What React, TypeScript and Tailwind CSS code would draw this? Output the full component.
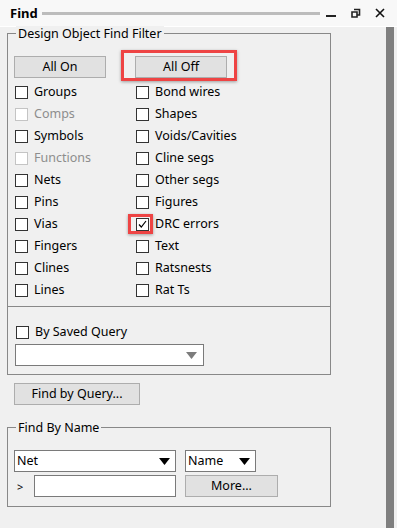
const font = { fontFamily: '"Noto Sans", "Open Sans", sans-serif' };

function Box({ checked, disabled }: { checked?: boolean; disabled?: boolean }) {
  return (
    <span
      className={`flex h-[13px] w-[13px] shrink-0 items-center justify-center border bg-white ${
        disabled ? "border-[#c4c4c4]" : "border-[#333333]"
      }`}
    >
      {checked && (
        <svg width="11" height="11" viewBox="0 0 11 11">
          <path d="M2 5.5 L4.3 8 L9 2" fill="none" stroke="#000" strokeWidth="1.2" />
        </svg>
      )}
    </span>
  );
}

function Check({
  label,
  checked,
  disabled,
}: {
  label: string;
  checked?: boolean;
  disabled?: boolean;
}) {
  return (
    <div className="flex h-[22px] items-center gap-[6px]">
      <Box checked={checked} disabled={disabled} />
      <span className={disabled ? "text-[#8d8d8d]" : "text-black"}>{label}</span>
    </div>
  );
}

function Btn({ label, w }: { label: string; w: string }) {
  return (
    <div
      className={`flex h-[22px] items-center justify-center border border-[#adadad] bg-[#e1e1e1] text-black ${w}`}
    >
      {label}
    </div>
  );
}

function Arrow({ color }: { color: string }) {
  return (
    <svg width="11" height="7" viewBox="0 0 11 7">
      <path d="M0 0 H11 L5.5 7 Z" fill={color} />
    </svg>
  );
}

const left = [
  { l: "Groups" },
  { l: "Comps", d: true },
  { l: "Symbols" },
  { l: "Functions", d: true },
  { l: "Nets" },
  { l: "Pins" },
  { l: "Vias" },
  { l: "Fingers" },
  { l: "Clines" },
  { l: "Lines" },
];

const right = [
  "Bond wires",
  "Shapes",
  "Voids/Cavities",
  "Cline segs",
  "Other segs",
  "Figures",
  "DRC errors",
  "Text",
  "Ratsnests",
  "Rat Ts",
];

export default function App() {
  return (
    <div
      className="flex h-[528px] w-[397px] flex-col overflow-hidden bg-[#f0f0f0] text-[12.5px] leading-none"
      style={font}
    >
      {/* TITLE BAR */}
      <div className="flex h-[27px] shrink-0 items-center border-b border-white bg-[#f8f8f8] pl-[10px]">
        <span className="text-[13px] font-bold text-black">Find</span>
        <div className="ml-[4px] h-[3px] w-[278px] bg-[#bcbcbc]" />
        <div className="ml-[6px] mt-[6px] h-[2px] w-[10px] bg-[#222]" />
        <svg className="ml-[15px]" width="10" height="10" viewBox="0 0 10 10">
          <path d="M1 4 H6 V9 H1 Z M3 1.5 H8.5 V7 H6" fill="none" stroke="#222" strokeWidth="1.6" />
        </svg>
        <svg className="ml-[14px]" width="10" height="10" viewBox="0 0 10 10">
          <path d="M1 1 L9 9 M9 1 L1 9" stroke="#111" strokeWidth="1.6" />
        </svg>
      </div>

      <div className="flex flex-1">
        <div className="flex-1">
          {/* DESIGN OBJECT FIND FILTER */}
          <div className="relative ml-[7px] mt-[6px] flex h-[342px] w-[324px] flex-col border border-[#888888]">
            <span className="absolute left-[8px] top-[-8px] bg-[#f0f0f0] px-[2px] leading-[16px] text-black">
              Design Object Find Filter
            </span>
            <div className="flex pl-[6px] pt-[22px]">
              <Btn label="All On" w="w-[92px]" />
              <div className="relative ml-[29px]">
                <Btn label="All Off" w="w-[92px]" />
                <div className="absolute left-[-14px] top-[-6px] h-[31px] w-[116px] border-[3px] border-[#ee4444] shadow-[0_1px_3px_rgba(0,0,0,0.35)]" />
              </div>
            </div>
            <div className="mt-[3px] flex">
              <div className="ml-[7px] flex w-[121px] flex-col">
                {left.map((r) => (
                  <Check key={r.l} label={r.l} disabled={r.d} />
                ))}
              </div>
              <div className="flex flex-col">
                {right.map((r) =>
                  r === "DRC errors" ? (
                    <div key={r} className="relative">
                      <Check label={r} checked />
                      <div className="absolute left-[-8px] top-[1px] h-[20px] w-[25px] border-[3px] border-[#ee4444] shadow-[0_1px_3px_rgba(0,0,0,0.35)]" />
                    </div>
                  ) : (
                    <Check key={r} label={r} />
                  )
                )}
              </div>
            </div>
            <div className="mt-[5px] border-t border-[#888888] pl-[7px] pt-[15px]">
              <div className="ml-[1px] flex h-[20px] items-center gap-[6px]">
                <Box />
                <span className="text-black">By Saved Query</span>
              </div>
              <div className="mt-[2px] flex h-[22px] w-[189px] items-center justify-end border border-[#7a7a7a] bg-white pr-[6px]">
                <Arrow color="#7c7c7c" />
              </div>
            </div>
          </div>

          <div className="ml-[14px] mt-[8px]">
            <Btn label="Find by Query..." w="w-[126px]" />
          </div>

          {/* FIND BY NAME */}
          <div className="relative ml-[7px] mt-[22px] h-[80px] w-[324px] border border-[#888888] pl-[6px] pt-[22px]">
            <span className="absolute left-[8px] top-[-8px] bg-[#f0f0f0] px-[2px] leading-[16px] text-black">
              Find By Name
            </span>
            <div className="flex gap-[9px]">
              <div className="flex h-[22px] w-[162px] items-center justify-between border border-[#7a7a7a] bg-white pl-[2px] pr-[5px] text-black">
                <span>Net</span>
                <Arrow color="#000" />
              </div>
              <div className="flex h-[22px] w-[71px] items-center justify-between border border-[#7a7a7a] bg-white pl-[2px] pr-[5px] text-black">
                <span>Name</span>
                <Arrow color="#000" />
              </div>
            </div>
            <div className="mt-[3px] flex items-center">
              <span className="w-[20px] pl-[3px] text-[11px] text-black">&gt;</span>
              <div className="h-[22px] w-[142px] border border-[#7a7a7a] bg-white" />
              <div className="ml-[9px]">
                <Btn label="More..." w="w-[93px]" />
              </div>
            </div>
          </div>
        </div>

        {/* SCROLLBAR */}
        <div className="mr-[3px] w-[8px] bg-[#7f7f7f]" />
      </div>
    </div>
  );
}
